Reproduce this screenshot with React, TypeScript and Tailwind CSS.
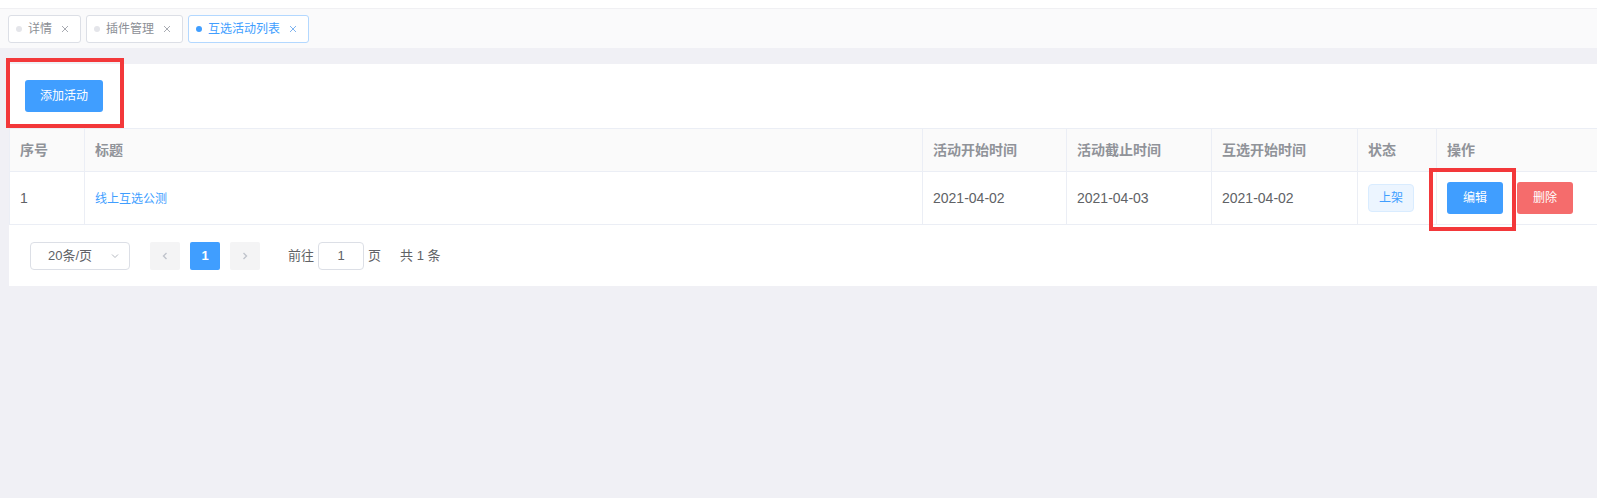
import React from "react";

const font = { fontFamily: '"Liberation Sans", "Noto Sans CJK SC", sans-serif' };

const CloseIcon: React.FC<{ active?: boolean }> = ({ active }) => (
  <svg viewBox="0 0 12 12" className="w-3 h-3" fill="none" stroke={active ? "#7fb4f0" : "#a8abb2"} strokeWidth="1">
    <path d="M3 3l6 6M9 3l-6 6" />
  </svg>
);

const Tab: React.FC<{ label: string; active?: boolean }> = ({ label, active }) => (
  <div
    className={`flex items-center h-7 pl-[7px] pr-[9px] rounded-[3px] border bg-white text-xs ${
      active ? "border-[#b3d8ff] text-[#409eff]" : "border-[#dcdfe6] text-[#8c8f96]"
    }`}
  >
    <span className={`w-1.5 h-1.5 rounded-full ${active ? "bg-[#409eff]" : "bg-[#e4e5ea]"}`} />
    <span className="ml-[6px]">{label}</span>
    <span className="ml-[7px] flex items-center">
      <CloseIcon active={active} />
    </span>
  </div>
);

const App: React.FC = () => {
  return (
    <div className="relative w-[1597px] h-[498px] bg-[#f0f0f5] overflow-hidden" style={font}>
      {/* Tags bar */}
      <div className="h-2 bg-white" />
      <div className="h-10 bg-[#fafafb] border-t border-[#f0f0f3] flex items-center gap-[5px] pl-2">
        <Tab label="详情" />
        <Tab label="插件管理" />
        <Tab label="互选活动列表" active />
      </div>

      {/* Content */}
      <div className="pt-4 pl-[9px]">
        <div className="bg-white">
          <div className="p-4">
            <button className="h-8 px-[15px] rounded-[3px] bg-[#409eff] text-white text-xs">添加活动</button>
          </div>

          {/* Table */}
          <div className="border-l border-[#ebeef5]">
            <div className="grid grid-cols-[75px_838px_144px_145px_146px_79px_1fr] h-[44px] bg-[#fafafa] border-t border-b border-[#ebeef5] text-sm font-semibold text-[#909399]">
              {["序号", "标题", "活动开始时间", "活动截止时间", "互选开始时间", "状态"].map((h) => (
                <div key={h} className="flex items-center px-[10px] border-r border-[#ebeef5]">
                  {h}
                </div>
              ))}
              <div className="flex items-center px-[10px]">操作</div>
            </div>
            <div className="grid grid-cols-[75px_838px_144px_145px_146px_79px_1fr] h-[53px] border-b border-[#ebeef5] text-sm text-[#606266]">
              <div className="flex items-center px-[10px] border-r border-[#ebeef5]">1</div>
              <div className="flex items-center px-[10px] pt-[2px] border-r border-[#ebeef5]">
                <span className="text-xs text-[#409eff]">线上互选公测</span>
              </div>
              <div className="flex items-center px-[10px] border-r border-[#ebeef5]">2021-04-02</div>
              <div className="flex items-center px-[10px] border-r border-[#ebeef5]">2021-04-03</div>
              <div className="flex items-center px-[10px] border-r border-[#ebeef5]">2021-04-02</div>
              <div className="flex items-center px-[10px] border-r border-[#ebeef5]">
                <span className="h-7 px-[10px] flex items-center rounded-[4px] border border-[#d9ecff] bg-[#ecf5ff] text-xs text-[#409eff]">
                  上架
                </span>
              </div>
              <div className="flex items-center gap-[14px] px-[10px]">
                <button className="h-8 w-14 rounded-[3px] bg-[#409eff] text-white text-xs">编辑</button>
                <button className="h-8 w-14 rounded-[3px] bg-[#f56c6c] text-white text-xs">删除</button>
              </div>
            </div>
          </div>

          {/* Pagination */}
          <div className="flex items-center h-[61px] pl-[21px] pt-px text-[13px] text-[#606266]">
            <div className="w-[100px] h-7 rounded-[4px] border border-[#dcdfe6] flex items-center justify-between pl-[17px] pr-[9px]">
              <span>20条/页</span>
              <svg viewBox="0 0 10 10" className="w-2.5 h-2.5" fill="none" stroke="#b4b8bf" strokeWidth="1">
                <path d="M2 3.5l3 3 3-3" />
              </svg>
            </div>
            <button className="ml-5 w-[30px] h-7 rounded-[2px] bg-[#f4f4f5] flex items-center justify-center">
              <svg viewBox="0 0 10 10" className="w-2.5 h-2.5" fill="none" stroke="#c0c4cc" strokeWidth="1.4">
                <path d="M6.5 2L3.5 5l3 3" />
              </svg>
            </button>
            <button className="ml-[10px] w-[30px] h-7 rounded-[2px] bg-[#409eff] text-white font-bold flex items-center justify-center">
              1
            </button>
            <button className="ml-[10px] w-[30px] h-7 rounded-[2px] bg-[#f4f4f5] flex items-center justify-center">
              <svg viewBox="0 0 10 10" className="w-2.5 h-2.5" fill="none" stroke="#c0c4cc" strokeWidth="1.4">
                <path d="M3.5 2l3 3-3 3" />
              </svg>
            </button>
            <span className="ml-[28px]">前往</span>
            <div className="ml-[4px] w-[46px] h-7 rounded-[4px] border border-[#dcdfe6] flex items-center justify-center">1</div>
            <span className="ml-[4px]">页</span>
            <span className="ml-[19px]">共 1 条</span>
          </div>
        </div>
      </div>

      {/* Annotation boxes */}
      <div className="absolute left-[6px] top-[58px] w-[118px] h-[70px] border-4 border-[#f3383a]" />
      <div className="absolute left-[1429px] top-[168px] w-[87px] h-[63px] border-4 border-[#f3383a]" />
    </div>
  );
};

export default App;
